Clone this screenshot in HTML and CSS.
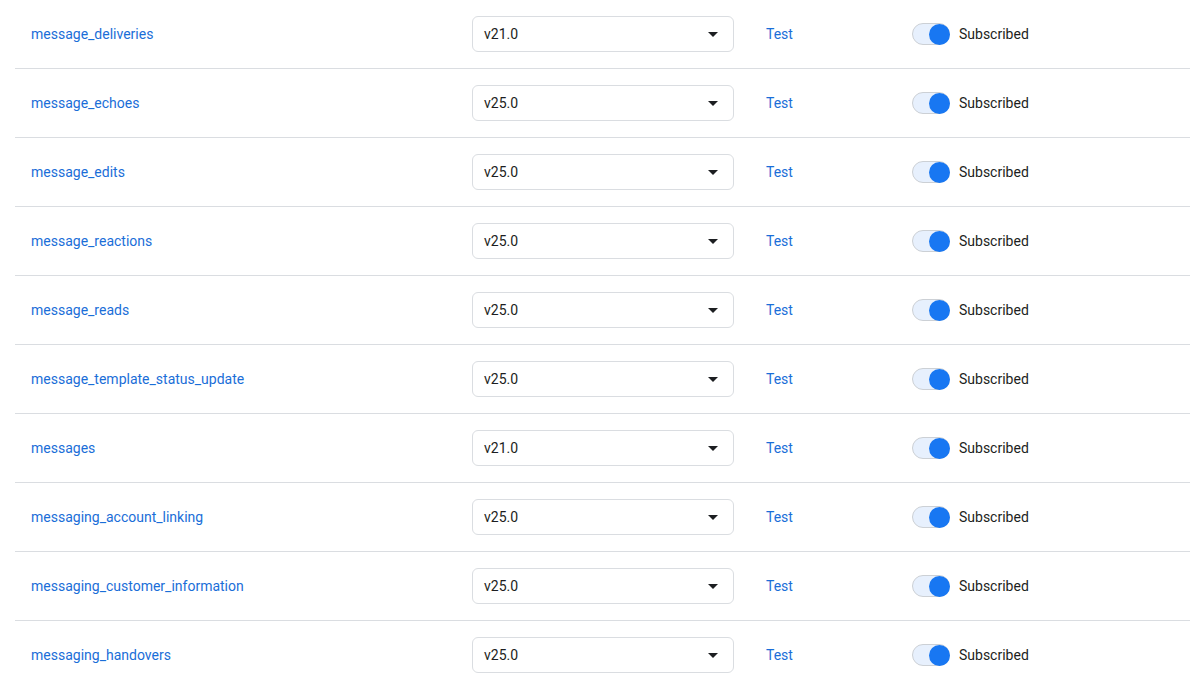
FILE: index.html
```html
<!DOCTYPE html>
<html>
<head>
<meta charset="utf-8">
<link rel="stylesheet" href="styles.css">
</head>
<body>
<div class="table">
  <div class="row"><div class="name">message_deliveries</div><div class="select"><span>v21.0</span><span class="caret"></span></div><div class="test">Test</div><div class="sub"><span class="toggle"><span class="knob"></span></span><span class="label">Subscribed</span></div></div>
  <div class="row"><div class="name">message_echoes</div><div class="select"><span>v25.0</span><span class="caret"></span></div><div class="test">Test</div><div class="sub"><span class="toggle"><span class="knob"></span></span><span class="label">Subscribed</span></div></div>
  <div class="row"><div class="name">message_edits</div><div class="select"><span>v25.0</span><span class="caret"></span></div><div class="test">Test</div><div class="sub"><span class="toggle"><span class="knob"></span></span><span class="label">Subscribed</span></div></div>
  <div class="row"><div class="name">message_reactions</div><div class="select"><span>v25.0</span><span class="caret"></span></div><div class="test">Test</div><div class="sub"><span class="toggle"><span class="knob"></span></span><span class="label">Subscribed</span></div></div>
  <div class="row"><div class="name">message_reads</div><div class="select"><span>v25.0</span><span class="caret"></span></div><div class="test">Test</div><div class="sub"><span class="toggle"><span class="knob"></span></span><span class="label">Subscribed</span></div></div>
  <div class="row"><div class="name">message_template_status_update</div><div class="select"><span>v25.0</span><span class="caret"></span></div><div class="test">Test</div><div class="sub"><span class="toggle"><span class="knob"></span></span><span class="label">Subscribed</span></div></div>
  <div class="row"><div class="name">messages</div><div class="select"><span>v21.0</span><span class="caret"></span></div><div class="test">Test</div><div class="sub"><span class="toggle"><span class="knob"></span></span><span class="label">Subscribed</span></div></div>
  <div class="row"><div class="name">messaging_account_linking</div><div class="select"><span>v25.0</span><span class="caret"></span></div><div class="test">Test</div><div class="sub"><span class="toggle"><span class="knob"></span></span><span class="label">Subscribed</span></div></div>
  <div class="row"><div class="name">messaging_customer_information</div><div class="select"><span>v25.0</span><span class="caret"></span></div><div class="test">Test</div><div class="sub"><span class="toggle"><span class="knob"></span></span><span class="label">Subscribed</span></div></div>
  <div class="row"><div class="name">messaging_handovers</div><div class="select"><span>v25.0</span><span class="caret"></span></div><div class="test">Test</div><div class="sub"><span class="toggle"><span class="knob"></span></span><span class="label">Subscribed</span></div></div>
</div>
</body>
</html>
```

FILE: styles.css
```css
html, body {
  margin: 0;
  padding: 0;
  background: #ffffff;
  font-family: Roboto, "Liberation Sans", Arial, sans-serif;
  font-size: 14px;
}
.table {
  margin: 0 13px 0 15px;
}
.row {
  display: flex;
  align-items: center;
  height: 68px;
  border-bottom: 1px solid #dadde1;
}
.name {
  width: 441px;
  padding-left: 16px;
  color: #1a6ed8;
}
.select {
  box-sizing: border-box;
  width: 262px;
  height: 36px;
  border: 1px solid #dadde1;
  border-radius: 6px;
  display: flex;
  align-items: center;
  justify-content: space-between;
  padding: 0 15px 0 11px;
  color: #1c1e21;
}
.caret {
  width: 0;
  height: 0;
  border-left: 5px solid transparent;
  border-right: 5px solid transparent;
  border-top: 5px solid #1c1e21;
  margin-top: 1px;
}
.test {
  width: 146px;
  margin-left: 32px;
  color: #1a6ed8;
}
.sub {
  display: flex;
  align-items: center;
}
.toggle {
  box-sizing: border-box;
  width: 38px;
  height: 22px;
  border-radius: 11px;
  background: #e7f0fd;
  border: 1px solid #ccd0d5;
  display: flex;
  align-items: center;
  justify-content: flex-end;
}
.knob {
  width: 21px;
  height: 21px;
  border-radius: 50%;
  background: #1877f2;
  margin-right: -1px;
}
.label {
  margin-left: 9px;
  color: #1c1e21;
}
```
